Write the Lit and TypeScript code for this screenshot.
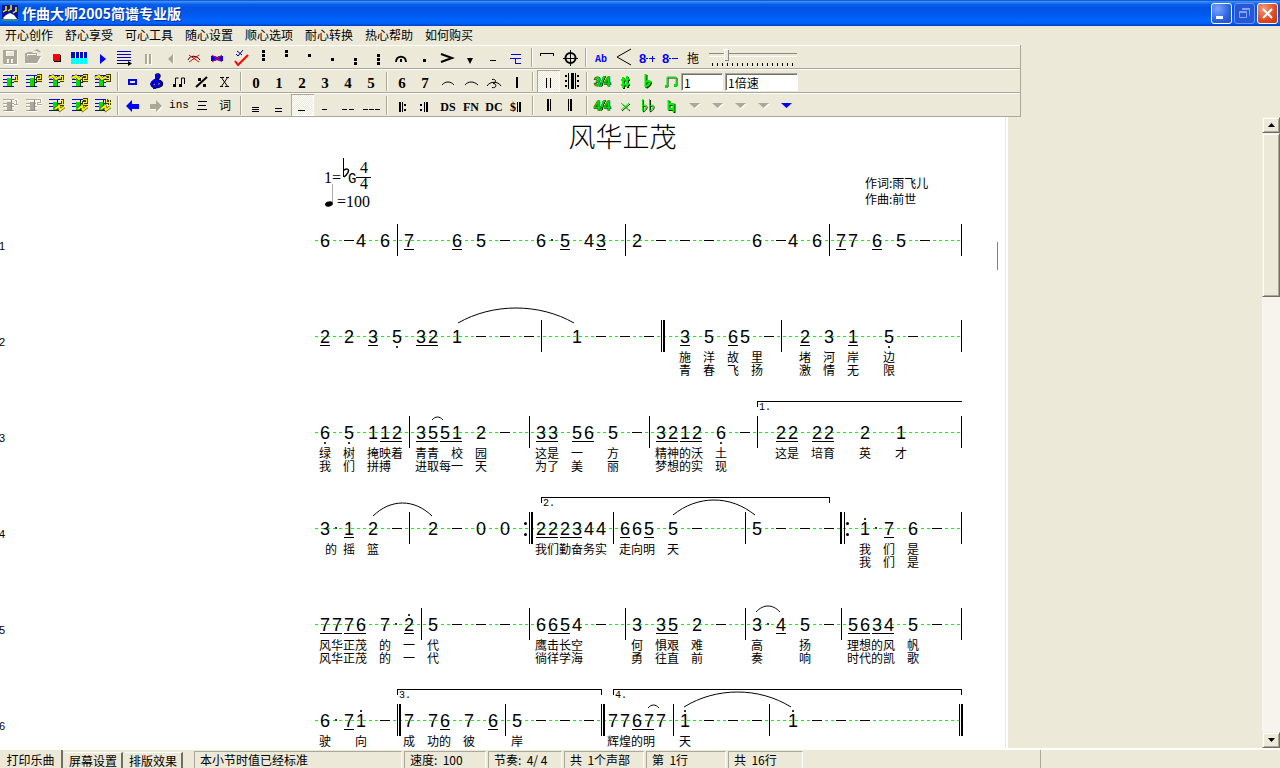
import { LitElement, html, svg, css, nothing, TemplateResult } from "lit";
import { customElement, property } from "lit/decorators.js";

/* ---------- tool glyphs, drawn on a 23 x 22 grid ---------- */

const line = (d: string, color = "#000", w = 1) =>
  svg`<path d=${d} fill="none" stroke=${color} stroke-width=${w} shape-rendering="crispEdges"/>`;
const curve = (d: string, color = "#000", w = 1) =>
  svg`<path d=${d} fill="none" stroke=${color} stroke-width=${w}/>`;
const solid = (d: string, color = "#000") => svg`<path d=${d} fill=${color} fill-rule="evenodd"/>`;
const etched = (d: string) =>
  svg`<path d=${d} transform="translate(1 1)" fill="#fff" fill-rule="evenodd"/><path d=${d} fill="#aca899" fill-rule="evenodd"/>`;
const raised = (d: string, w = 2) =>
  svg`<g fill="none" stroke-width=${w}><path d=${d} transform="translate(1 1)" stroke="#003000"/><path d=${d} stroke="#00f000"/></g>`;
const dots = (...ys: number[]) => ys.map((y) => svg`<rect x="10" y=${y} width="3" height="3"/>`);
const word = (t: string, cls: string, y = 17) =>
  svg`<text class=${cls} x="11" y=${y} text-anchor="middle">${t}</text>`;
const cross = (y: number) => curve(`M6 ${y}l10 7M16 ${y}l-10 7`, "#f00");

/* small numerals in the corner of the staff tools */
const TAGS: Record<string, string> = {
  "1": "M15.500 6.500h1.500v4M15 10.500h4",
  "2": "M15 5.500h3.500v2.500h-3v2.500h4",
  "3": "M15 5.500h3.500v5h-3.500M15.500 8h3",
  "4": "M15.500 5v3.500h4M18 6v5",
};

const staff = (n: string, alt: boolean, grey = false) => {
  const ink = grey ? "#aca899" : "#0000e0";
  return svg`
    ${grey ? line("M5 6.500h11M5 10.500h11M5 13.500h11M5 17.500h11", "#fff") : nothing}
    ${line("M4 5.500h11M4 9.500h11M4 12.500h11M4 16.500h11", ink)}
    <rect x="8" y="8" width="4" height="9" fill=${grey ? "#aca899" : "#00e000"}/>
    ${line("M12.500 6v11M7 16.500h6", grey ? "#8c897c" : "#003000")}
    ${alt ? svg`${curve("M4 8l4-2 3 3 4-2", "#3c3a00", 3)}${curve("M4 8l4-2 3 3 4-2", "#fff200", 2)}` : nothing}
    ${line(TAGS[n], grey ? "#fff" : "#3c3a00", 3)}${line(TAGS[n], grey ? "#aca899" : "#fff200")}`;
};
const staffDown = (n: string) =>
  svg`${staff(n, false)}${curve("M10 15l4-3 1 4 4-3", "#3c3a00", 3)}${curve("M10 15l4-3 1 4 4-3", "#fff200", 2)}`;

type Tool = { label: string; art: unknown; on?: boolean } | "sep";
const tool = (label: string, art: unknown, on = false): Tool => ({ label, art, on });
const SEP: Tool = "sep";

const FLAT = "M8.500 4v13M8.500 12c6-3 6 1 0 5";
const PAIR = "M7 16V7h9v8";
const DOWN = "M6 9h11l-5.500 5z";

const meter = (top: string, bottom: string) => svg`
  ${line("M14 6l-4 11", "#003000", 2)}${line("M13 6l-4 11", "#00e000", 2)}
  <text class="sig" x="3" y="16">${top}</text><text class="sig" x="13" y="16">${bottom}</text>`;

const ROW1: Tool[] = [
  tool("保存", etched("M4 4h14v14H5l-1-1zM7 5v5h8V5zM8 13v4h2v-4zM12 13v4h2v-4z")),
  tool("打开", etched("M3 17V7h2l1-1h4l1 1h4v3h4l-4 7zM5 11l1-2h8V8H5zM12 5l3-2 3 2 1 2-3-1-1-1z")),
  tool("停止", svg`<rect x="9" y="9" width="7" height="7"/><rect x="8" y="8" width="7" height="7" fill="#f00"/>`),
  tool("钢琴", svg`<rect x="3" y="6" width="16" height="12" fill="#0ff"/><path d="M3 6h4v6H3zM8 6h3v6H8zM12 6h3v6h-3zM16 6h3v6h-3z" fill="#0010c0"/><path d="M7.500 6v12M11.500 6v12M15.500 6v12" stroke="#fff" shape-rendering="crispEdges"/>`),
  tool("播放", solid("M9 8l6 5-6 5z", "#00f")),
  tool("从头播放", svg`${line("M3 5.500h14M3 8.500h14M3 11.500h14M3 14.500h14", "#0000c8")}${line("M3 17.500h14")}${solid("M14 15l4 2.500-4 2.500z")}`),
  tool("暂停", etched("M8 8h2v10H8zM12 8h2v10h-2z")),
  tool("后退", etched("M13 8v10l-5-5z")),
  tool("取消连线", svg`${curve("M5 14c2-5 9-5 12 0")}${cross(9)}`),
  tool("取消选择", svg`<path d="M5 10h4l2 1 2-1h4v5h-4l-2-1-2 1H5z" fill="#00f"/>${cross(9)}`),
  tool("检查", svg`${curve("M7 8l2 2 5-6M8 5l5 4", "#0000a0")}${curve("M6 15l3 4 10-10", "#f00", 2)}`),
  tool("高三点", dots(4, 8, 12)),
  tool("高两点", dots(4, 8)),
  tool("高一点", dots(8)),
  tool("低一点", dots(12)),
  tool("低两点", dots(12, 16)),
  tool("低三点", dots(8, 12, 16)),
  tool("延长", svg`${curve("M6 16c0-7 10-7 10 0", "#000", 2)}<rect x="10" y="13" width="2" height="3"/>`),
  tool("顿音", dots(13)),
  tool("重音", curve("M5 8l11 4-11 4", "#000", 2)),
  tool("短顿音", solid("M8 12h6l-3 6z")),
  tool("保持音", line("M8 14.500h6")),
  tool("下", line("M6 8.500h10M5 12.500h11M10.500 12v5h5", "#00f")),
  SEP,
  tool("方括号", line("M4.500 10V7.500h13V10")),
  tool("尾声", svg`<circle cx="11.500" cy="12" r="5" fill="none" stroke="#000" stroke-width="2"/>${line("M11.500 4v16M4 12.500h15")}`),
  SEP,
  tool("文字", word("Ab", "mono blue", 16)),
  tool("渐强", curve("M18 3L4 11l14 8")),
  tool("高八度", svg`<text class="eight" x="3" y="17">8</text>${line("M10 12.500h2M13 12.500h6M16.500 10v6", "#00f")}`),
  tool("低八度", svg`<text class="eight" x="3" y="17">8</text>${line("M10 12.500h2M13 12.500h6", "#00f")}`),
  tool("拖动", word("拖", "han", 17)),
];

const ROW2: Tool[] = [
  tool("第一声部", staff("1", false)),
  tool("第二声部", staff("2", false)),
  tool("插入一行", staff("1", true)),
  tool("插入二行", staff("2", true)),
  tool("插入三行", staff("3", true)),
  SEP,
  tool("选择框", svg`<rect x="7" y="10" width="7" height="4" fill="none" stroke="#00f" stroke-width="2"/>`),
  tool("谱号", svg`
    ${curve("M12 18V5c3-1 3 2 0 4-5 3-7 7-2 8 5 0 8-2 6-5-2-2-6-1-5 2", "#000", 3)}
    ${curve("M11 17V5c3-1 3 2 0 4-5 3-7 6-2 7 5 1 8-1 6-4-2-2-6-1-5 2", "#0000f0", 2)}
    ${solid("M8 16h3v3H8z", "#0000f0")}`),
  tool("连音", svg`${curve("M7.500 15V8h3M13.500 15V8h3v6")}${solid("M5 14h3v3H5zM11 14h3v3h-3z")}`),
  tool("反复记号", svg`${curve("M5 17L16 7", "#000", 2)}${solid("M7 8h3v3H7zM12 14h3v3h-3z")}`),
  tool("删除", curve("M7 7l7 10M14 7L7 17M6 7.500h4M12 7.500h3M6 16.500h3M11 16.500h4", "#000", 1)),
  SEP,
  ...["0", "1", "2", "3", "4", "5"].map((d) => tool(d, word(d, "digit", 18))),
  SEP,
  ...["6", "7"].map((d) => tool(d, word(d, "digit", 18))),
  tool("连线", curve("M5 15c3-4 9-4 12 0")),
  tool("圆滑线", curve("M5 15c3-4 9-4 13 0")),
  tool("取消圆滑线", svg`${curve("M4 16c3-5 11-5 14 0M9 9.500c4-1 5 3 1 4 4 0 4 5-1 4")}`),
  tool("小节线", line("M11 7v11", "#000", 2)),
  SEP,
  tool("双小节线", line("M9.500 8v10M13.500 8v10"), true),
  tool("双反复", svg`${line("M8.500 3v16M15.500 3v16")}${line("M12 3v16", "#000", 3)}${solid("M5 5h2v2H5zM5 10h2v2H5zM5 15h2v2H5zM17 5h2v2h-2zM17 10h2v2h-2zM17 15h2v2h-2z")}`),
  SEP,
  tool("四三拍", meter("3", "4")),
  tool("升号", raised("M9 7v11M13 6v11M7 10l8-1M7 15l8-1", 2)),
  tool("降号", raised(FLAT)),
  tool("音符组", svg`${raised(PAIR, 1)}${solid("M5 15h3v3H5zM14 14h3v3h-3z", "#00e000")}`),
];

const ROW3: Tool[] = [
  tool("合并一", staff("1", false, true)),
  tool("合并二", staff("2", false, true)),
  tool("追加一行", staffDown("1")),
  tool("追加二行", staffDown("2")),
  tool("追加四行", staffDown("4")),
  SEP,
  tool("上一步", solid("M4 12l6-6v4h7v5h-7v3z", "#00f")),
  tool("下一步", etched("M17 12l-6-6v4H5v5h6v3z")),
  tool("插入", word("ins", "mono", 14)),
  tool("行列", line("M7 7.500h9M7 11.500h8M6 15.500h10")),
  tool("歌词", word("词", "han", 16)),
  SEP,
  tool("三十二分", line("M7 13.500h7M7 15.500h7M7 17.500h7")),
  tool("十六分", line("M7 14.500h7M7 17.500h7")),
  tool("八分", line("M7 16.500h7"), true),
  tool("二分", line("M8 15.500h5")),
  tool("附点二分", line("M5 15.500h5M12 15.500h5")),
  tool("全音", line("M3 15.500h5M9 15.500h5M15 15.500h5")),
  SEP,
  tool("反复开始", svg`${line("M9 8v10", "#000", 2)}${line("M11.500 8v10")}${solid("M13 10h2v2h-2zM13 15h2v2h-2z")}`),
  tool("反复结束", svg`${line("M10.500 8v10")}${line("M13 8v10", "#000", 2)}${solid("M6 10h2v2H6zM6 15h2v2H6z")}`),
  tool("DS", word("DS", "code")),
  tool("FN", word("FN", "code")),
  tool("DC", word("DC", "code")),
  tool("终止记号", svg`<text class="code" x="4" y="17">$</text>${line("M11.500 8v10")}${line("M14 8v10", "#000", 2)}`),
  SEP,
  tool("粗双线", svg`${line("M11 5v12", "#000", 2)}${line("M13.500 5v12")}`),
  tool("终止线", svg`${line("M8.500 5v12")}${line("M11 5v12", "#000", 2)}`),
  SEP,
  tool("四四拍", meter("4", "4")),
  tool("重升号", raised("M7 9l8 7M15 9l-8 7", 1)),
  tool("重降号", raised("M5.500 5v12M5.500 12c5-3 5 2 0 5M12.500 5v12M12.500 12c5-3 5 2 0 5", 1)),
  tool("还原号", raised("M8.500 6v9h5M8.500 10h5v8", 2)),
  tool("菜单一", etched(DOWN)),
  tool("菜单二", etched(DOWN)),
  tool("菜单三", etched(DOWN)),
  tool("菜单四", etched(DOWN)),
  tool("菜单五", solid(DOWN, "#00f")),
];

/* ---------- score data: every mark is keyed by its column ---------- */

interface Line {
  notes: string;        // column:digit, with ' above or , below; "-" held, "." dotted
  under: string;        // column ranges of the beams
  bars: string;         // column plus kind: D double, E repeat end, S repeat start, F final
  slurs?: number[][];   // from x, to x, end y, top y
  voltas?: [number, number, string, boolean][];
  words?: string[];
}

const SCORE: Line[] = [
  {
    notes: "0:6 2:- 3:4 5:6 7:7 11:6 13:5 15:- 18:6 19:. 20:5 22:4 23:3 26:2 28:- 30:- 32:- 36:6 38:- 39:4 41:6 43:7 44:7 46:6 48:5 50:-",
    under: "7 11 20 23 43 46",
    bars: "6 25 42 53",
  },
  {
    notes: "0:2 2:2 4:3 6:5, 8:3 9:2 11:1 13:- 15:- 17:- 21:1 23:- 25:- 27:- 30:3 32:5 34:6 35:5 37:- 40:2 42:3 44:1 47:5, 49:-",
    under: "0 4 8-9 30 34 40 44",
    bars: "18 28D 38 53",
    slurs: [[143, 259, 35, 20]],
    words: ["30施 32洋 34故 36里 40堵 42河 44岸 47边", "30青 32春 34飞 36扬 40激 42情 44无 47限"],
  },
  {
    notes: "0:6, 2:5, 4:1 5:1 6:2 8:3 9:5 10:5 11:1 13:2 15:- 18:3 19:3 21:5 22:6 24:5 26:- 28:3 29:2 30:1 31:2 33:6, 35:- 38:2 39:2 41:2 42:2 45:2 48:1",
    under: "5-6 8-9 10-11 18-19 21-22 28-29 30-31 38-39 41-42",
    bars: "7 17 27 36 53",
    slurs: [[117, 128, 36, 33]],
    voltas: [[36, 53, "1.", false]],
    words: [
      "0绿 2树 4掩映着 8青青 11校 13园 18这是 21一 24方 28精神的沃 33土 38这是 41培育 45英 48才",
      "0我 2们 4拼搏 8进取每一 13天 18为了 21美 24丽 28梦想的实 33现",
    ],
  },
  {
    notes: "0:3 1:. 2:1 4:2 6:- 9:2 11:- 13:0 15:0 18:2 19:2 20:2 21:3 22:4 23:4 25:6 26:6 27:5 29:5 31:- 36:5 38:- 40:- 42:- 45:1' 46:. 47:7 49:6 51:-",
    under: "2 18-19 20-21 25 27 47",
    bars: "7 17E 24 35 43S 53",
    slurs: [[58, 117, 36, 23], [358, 440, 35, 20]],
    voltas: [[18, 42, "2.", true]],
    words: ["0.5的 2摇 4篮 18我们勤奋务实 25走向明 29天 45我 47们 49是", "45我 47们 49是"],
  },
  {
    notes: "0:7 1:7 2:7 3:6 5:7 6:. 7:2' 9:5 11:- 13:- 15:- 18:6 19:6 20:5 21:4 23:- 26:3 28:3 29:5 31:2 33:- 36:3 37:. 38:4 40:5 42:- 44:5 45:6 46:3 47:4 49:5 51:-",
    under: "0-1 2-3 7 19-20 28-29 38 44-45 46-47",
    bars: "8 17 25 35 43 53",
    slurs: [[441, 465, 36, 30]],
    words: [
      "0风华正茂 5的 7一 9代 18鹰击长空 26何 28惧艰 31难 36高 40扬 44理想的风 49帆",
      "0风华正茂 5的 7一 9代 18徜徉学海 26勇 28往直 31前 36奏 40响 44时代的凯 49歌",
    ],
  },
  {
    notes: "0:6 1:. 2:7 3:1' 5:- 7:7 9:7 10:6 12:7 14:6 16:5 18:- 20:- 22:- 24:7 25:7 26:6 27:7 28:7 30:1' 32:- 34:- 36:- 39:1' 41:- 43:- 45:-",
    under: "2 10 14 26-27",
    bars: "6D 15 23D 29 37 53F",
    slurs: [[333, 344, 36, 33], [369, 476, 35, 20]],
    voltas: [[6, 23, "3.", true], [24, 53, "4.", true]],
    words: ["0驶 3向 7成 9功的 12彼 16岸 24辉煌的明 30天"],
  },
];

const colX = (c: number) => 10 + 12 * c;

@customElement("score-line")
class ScoreLine extends LitElement {
  @property({ attribute: false }) data!: Line;
  @property({ type: Number }) number = 1;

  static styles = css`
    :host { display: flex; height: 96px; flex: none; }
    .no { width: 315px; font: 11px/12px "Liberation Sans", sans-serif; padding-top: 48px; box-sizing: border-box; flex: none; text-indent: -1px; }
    .music { width: 650px; height: 96px; overflow: visible; flex: none; }
    .note { font: 18px "Liberation Sans", sans-serif; text-anchor: middle; }
    .lyric { font: 12px "Noto Sans CJK SC", sans-serif; text-anchor: middle; }
    .ending { font: 10px "Liberation Mono", monospace; }
  `;

  private note(token: string) {
    const [c, v] = token.split(":");
    const x = colX(Number(c));
    if (v === "-") return svg`<rect x=${x - 5} y="48" width="10" height="1"/>`;
    if (v === ".") return svg`<rect x=${x - 2} y="47" width="2" height="2" fill="#333"/>`;
    return svg`<text class="note" x=${x} y="55">${v[0]}</text>
      ${v[1] === "'" ? svg`<rect x=${x - 1} y="38" width="2" height="2" fill="#333"/>` : nothing}
      ${v[1] === "," ? svg`<rect x=${x - 1} y="58" width="2" height="2" fill="#333"/>` : nothing}`;
  }

  private beam(token: string) {
    const [a, b = a] = token.split("-").map(Number);
    return svg`<rect x=${colX(a) - 5} y="57" width=${12 * (b - a) + 10} height="1"/>`;
  }

  private bar(token: string) {
    const x = colX(parseInt(token));
    const kind = token.replace(/\d/g, "");
    const v = (at: number, w: number) => svg`<rect x=${x + at} y="32" width=${w} height="32"/>`;
    const pair = (at: number) => svg`<circle cx=${x + at + 1.5} cy="43.500" r="1.500"/><circle cx=${x + at + 1.5} cy="54.500" r="1.500"/>`;
    switch (kind) {
      case "D": return svg`${v(0, 1)}${v(2, 2)}`;
      case "E": return svg`${pair(-5)}${v(0, 1)}${v(2, 2)}`;
      case "S": return svg`${v(-1, 2)}${v(3, 1)}${pair(5)}`;
      case "F": return svg`${v(-2, 1)}${v(0, 2)}`;
      default: return v(0, 1);
    }
  }

  private lyric(row: string, i: number) {
    return row.split(" ").map((t) => {
      const [, at, chars] = t.match(/^([\d.]+)(.+)$/)!;
      const xs = [...chars].map((_, k) => colX(Number(at) + k)).join(" ");
      return svg`<text class="lyric" x=${xs} y=${74 + 13 * i}>${chars}</text>`;
    });
  }

  render() {
    const d = this.data;
    return html`<span class="no">${this.number}</span>
      <svg class="music" viewBox="0 0 650 96" role="img" aria-label="第${this.number}行">
        <path d="M0 48.500H646" stroke="#00ff00" stroke-dasharray="3 3" shape-rendering="crispEdges"/>
        ${d.notes.split(" ").map((t) => this.note(t))}
        ${d.under.split(" ").map((t) => this.beam(t))}
        ${d.bars.split(" ").map((t) => this.bar(t))}
        ${(d.slurs ?? []).map(([a, b, end, top]) => {
          const cy = end - ((end - top) * 4) / 3;
          const k = (b - a) * 0.3;
          return svg`<path d="M${a} ${end}C${a + k} ${cy} ${b - k} ${cy} ${b} ${end}" fill="none" stroke="#000"/>`;
        })}
        ${(d.voltas ?? []).map(([a, b, label, closed]) => svg`
          <path d="M${colX(a) + 0.5} 23V17.500H${colX(b) + 0.5}${closed ? "V23" : ""}" fill="none" stroke="#000" shape-rendering="crispEdges"/>
          <text class="ending" x=${colX(a) + 2} y="26">${label}</text>`)}
        ${(d.words ?? []).map((r, i) => this.lyric(r, i))}
      </svg>`;
  }
}

const MENUS = ["开心创作", "舒心享受", "可心工具", "随心设置", "顺心选项", "耐心转换", "热心帮助", "如何购买"];

@customElement("app-root")
class AppRoot extends LitElement {
  static styles = css`
    :host { display: flex; flex-direction: column; height: 100vh; overflow: hidden; background: #ece9d8; color: #000; font: 12px/16px "Noto Sans CJK SC", sans-serif; }
    button, input { font: inherit; color: inherit; }
    button { border: 0; padding: 0; background: none; }

    .caption { display: flex; align-items: center; height: 26px; flex: none; box-sizing: border-box; padding: 0 2px; gap: 4px;
      background: linear-gradient(#0b3fc4 0, #3a93ff 6%, #0a60ee 16%, #0054e3 30%, #0058ee 55%, #0066ff 80%, #0060f5 90%, #003ac0 100%); }
    .logo { width: 16px; height: 16px; }
    .name { flex: 1; margin: 0; color: #fff; font-size: 14px; line-height: 20px; font-weight: 700; text-shadow: 1px 1px #0a2d8f; }
    .win { display: flex; gap: 2px; }
    .win button { width: 21px; height: 21px; border: 1px solid #fff; border-radius: 3px; background: radial-gradient(circle at 30% 25%, #7ba6f8, #2c62e4 60%, #1c4bd0); }
    .win .dim { border-color: #6d92ea; background: #2458d8; }
    .win .close { background: radial-gradient(circle at 30% 25%, #f09a7c, #dd4a22 60%, #c03610); }
    .win svg { display: block; }

    .menu { display: flex; flex: none; height: 19px; padding-left: 5px; gap: 12px; align-items: flex-start; }
    .menu button { line-height: 17px; width: 48px; white-space: nowrap; }

    .tools { display: flex; flex-direction: column; flex: none; border-right: 1px solid #aca899; width: 1020px; max-width: 100%; }
    .row { display: flex; height: 22px; border-top: 1px solid #fff; border-bottom: 1px solid #aca899; margin-left: -1px; align-items: center; }
    .tool { width: 23px; height: 22px; flex: none; }
    .tool.on { box-shadow: inset 1px 1px #aca899, inset -1px -1px #fff; background: repeating-conic-gradient(#fff 0 25%, #ece9d8 0 50%) 0 0 / 2px 2px; }
    .tool svg { display: block; width: 23px; height: 22px; }
    .sep { width: 1px; height: 19px; margin: 0 3px; background: #aca899; border-right: 1px solid #fff; flex: none; }
    .mono { font: 11px "Liberation Mono", monospace; }
    .blue { fill: #00f; font-size: 10px; font-weight: 700; }
    .eight { font: bold 13px "Liberation Sans", sans-serif; fill: #00f; }
    .han { font: 12px "Noto Sans CJK SC", sans-serif; }
    .digit { font: bold 15px "Liberation Serif", serif; }
    .code { font: bold 12px "Liberation Serif", serif; }
    .sig { font: bold 12px "Liberation Sans", sans-serif; fill: #00e000; stroke: #003000; stroke-width: 1px; paint-order: stroke; }

    .slide { display: flex; flex-direction: column; width: 88px; margin-left: 4px; }
    .slide input { appearance: none; width: 88px; height: 12px; margin: 0; background: linear-gradient(#8c897c, #8c897c) 0 4px / 100% 1px no-repeat, linear-gradient(#fff, #fff) 0 7px / 100% 1px no-repeat; }
    .slide input::-webkit-slider-thumb { appearance: none; width: 5px; height: 12px; background: #ece9d8; box-shadow: inset 1px 1px #fff, inset -1px -1px #8c897c; }
    .ticks { height: 3px; margin: 2px 0 0 3px; background: repeating-linear-gradient(90deg, #000 0 1px, transparent 1px 5px); width: 84px; }
    .box { box-sizing: border-box; height: 18px; padding: 0 2px; margin: 2px 2px 0 0; border: 1px solid; border-color: #aca899 #fff #fff #aca899; box-shadow: inset 1px 1px #716f64; background: #fff; border-radius: 0; flex: none; }
    .track { width: 42px; margin-left: -2px; }
    .speed { width: 73px; }

    .body { display: flex; flex: 1; min-height: 0; }
    .page { position: relative; flex: 0 1 1005px; overflow: hidden; background: #fff; border-right: 1px solid #ece9d8; box-shadow: 2px 0 #fff; }
    .head { display: grid; grid-template-columns: 65px 1fr 97px; margin-left: 315px; width: 647px; height: 75px; }
    .song { margin: 0; padding-top: 2px; text-align: center; font-weight: 300; font-size: 27px; line-height: 34px; }
    .key { width: 57px; height: 60px; margin: 33px 0 0 8px; overflow: visible; }
    .key text { font: 16px "Liberation Serif", serif; }
    .key .tonic { font: 14px "Liberation Mono", monospace; }
    .by { margin: 58px 0 0; line-height: 16px; white-space: nowrap; }
    .caret { position: absolute; left: 997px; top: 125px; width: 1px; height: 28px; background: #808080; }
    .gap { flex: 1; }

    .scroll { display: flex; flex-direction: column; width: 18px; flex: none; background: #f6f4ec; }
    .scroll button, .thumb { box-sizing: border-box; background: #ece9d8; border: 1px solid; border-color: #f1efe2 #716f64 #716f64 #f1efe2; box-shadow: inset 1px 1px #fff, inset -1px -1px #aca899; }
    .scroll button { height: 16px; flex: none; display: grid; place-items: center; }
    .thumb { height: 26%; }
    .scroll .rest { flex: 1; }

    .status { display: flex; flex: none; height: 18px; border-top: 2px solid #fff; }
    .strip { display: flex; gap: 2px; width: 1040px; max-width: 100%; border-right: 1px solid #aca899; overflow: hidden; }
    .tabs { display: flex; gap: 2px; width: 192px; align-items: flex-end; flex: none; }
    .tab { height: 15px; line-height: 15px; flex: 0 0 56px; box-sizing: content-box; white-space: nowrap; border-right: 2px solid #716f64; border-top: 1px solid #fff; }
    .tab.cur { height: 18px; line-height: 17px; flex-basis: 61px; border-top: 0; }
    .cell { box-sizing: border-box; margin-top: 1px; padding-left: 5px; border: 1px solid; border-color: #aca899 #fff #fff #aca899; white-space: pre; line-height: 16px; flex: none; border-bottom: 0; }
  `;

  private row(items: Tool[], tail: unknown = nothing): TemplateResult {
    return html`<div class="row">
      ${items.map((t) =>
        t === "sep"
          ? html`<span class="sep"></span>`
          : html`<button class="tool ${t.on ? "on" : ""}" aria-label=${t.label}><svg viewBox="0 0 23 22">${t.art}</svg></button>`
      )}${tail}
    </div>`;
  }

  render() {
    const cells: [string, number][] = [
      ["本小节时值已经标准", 208], ["速度:  100", 82], ["节奏:  4/ 4", 74], ["共  1个声部", 80], ["第  1行", 80], ["共  16行", 75],
    ];
    return html`
      <header class="caption">
        <svg class="logo" viewBox="0 0 16 16">
          <rect width="16" height="16" fill="#0a1496"/>
          <path d="M4 1v5M9 0v5M14 2v5M1 7l3-2M6 6l3-2M11 8l3-2" stroke="#ffe600" stroke-width="1.500"/>
          <path d="M1 13l3-3 4-2 4 2 3 4-6 1H3z" fill="#fff"/>
          <path d="M0 14h16v2H0z" fill="#3f8c6a"/>
        </svg>
        <h1 class="name">作曲大师2005简谱专业版</h1>
        <div class="win">
          <button aria-label="最小化"><svg viewBox="0 0 19 19"><path d="M4 12h7v3H4z" fill="#fff"/></svg></button>
          <button class="dim" aria-label="还原"><svg viewBox="0 0 19 19"><path d="M4.500 7.500h7v6h-7zM7 5.500h7.500v6M4 8.500h8M7 4.500h8" fill="none" stroke="#86a5ee"/></svg></button>
          <button class="close" aria-label="关闭"><svg viewBox="0 0 19 19"><path d="M5 5l9 9M14 5l-9 9" stroke="#fff" stroke-width="2"/></svg></button>
        </div>
      </header>
      <nav class="menu">${MENUS.map((m) => html`<button>${m}</button>`)}</nav>
      <div class="tools">
        ${this.row(ROW1, html`<div class="slide"><input type="range" min="0" max="100" value="18" aria-label="速度" /><span class="ticks"></span></div>`)}
        ${this.row(ROW2, html`<input class="box track" value="1" aria-label="声部" /><input class="box speed" value="1倍速" aria-label="倍速" />`)}
        ${this.row(ROW3)}
      </div>
      <main class="body">
        <section class="page">
          <div class="head">
            <svg class="key" viewBox="0 0 57 60" role="img" aria-label="调号与速度">
              <text x="1" y="33">1=</text>
              <path d="M20.500 8v19" stroke="#000"/>
              <path d="M21 20c6-3 6 2 0 7" fill="none" stroke="#000" stroke-width="1.500"/>
              <text class="tonic" x="25" y="33">G</text>
              <text x="37" y="23">4</text>
              <path d="M33 27.500h15" stroke="#000"/>
              <text x="37" y="39">4</text>
              <path d="M9.500 34v19" stroke="#aaa"/><ellipse cx="6" cy="54" rx="4" ry="2.500" transform="rotate(-15 6 54)"/>
              <text x="14" y="57">=100</text>
            </svg>
            <h2 class="song">风华正茂</h2>
            <p class="by">作词:雨飞儿<br />作曲:前世</p>
          </div>
          ${SCORE.map((d, i) => html`<score-line .data=${d} .number=${i + 1}></score-line>`)}
          <span class="caret"></span>
        </section>
        <div class="gap"></div>
        <div class="scroll">
          <button aria-label="向上滚动"><svg width="7" height="4"><path d="M0 4l3.500-4L7 4z"/></svg></button>
          <div class="thumb"></div>
          <div class="rest"></div>
          <button aria-label="向下滚动"><svg width="7" height="4"><path d="M0 0l3.500 4L7 0z"/></svg></button>
        </div>
      </main>
      <footer class="status">
        <div class="strip">
          <div class="tabs">
            <button class="tab cur">打印乐曲</button><button class="tab">屏幕设置</button><button class="tab">排版效果</button>
          </div>
          ${cells.map(([t, w]) => html`<span class="cell" style="width:${w}px">${t}</span>`)}
        </div>
      </footer>`;
  }
}
